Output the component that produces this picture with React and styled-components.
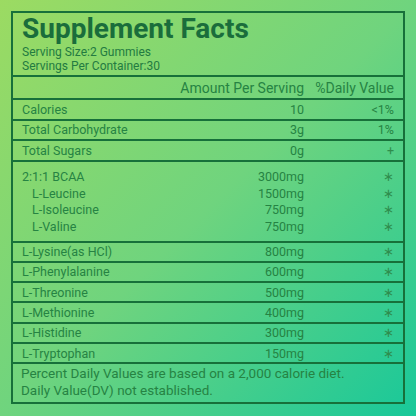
import React from "react";
import styled, { createGlobalStyle } from "styled-components";

const Global = createGlobalStyle`
  html, body { margin: 0; padding: 0; }
  body { font-family: Roboto, "Liberation Sans", sans-serif; }
`;

const Page = styled.div`
  width: 416px;
  height: 416px;
  box-sizing: border-box;
  padding: 11px;
  background: linear-gradient(135deg, #9cdb62 0%, #6fd47e 50%, #18c89a 100%);
`;

const Panel = styled.div`
  width: 394px;
  height: 393px;
  box-sizing: border-box;
  border: 2px solid #17703a;
  display: flex;
  flex-direction: column;
  color: #268343;
`;

const Header = styled.div`
  height: 64px;
  box-sizing: border-box;
  padding: 0 9px;
  border-bottom: 2px solid #17703a;
`;

const Title = styled.h1`
  margin: 0;
  font-size: 28px;
  line-height: 32px;
  font-weight: 700;
  color: #1a6d3b;
`;

const Serving = styled.div`
  font-size: 12px;
  line-height: 14px;
  color: #237b41;
`;

const Row = styled.div`
  display: grid;
  grid-template-columns: 1fr auto 90px;
  align-items: center;
  padding: 0 9px;
  height: ${(p) => p.$h}px;
  border-bottom: 2px solid #17703a;
  font-size: ${(p) => (p.$head ? 14 : 12.5)}px;
`;

const Block = styled.div`
  padding: 7px 9px 6px;
  border-bottom: 2px solid #17703a;
`;

const Sub = styled.div`
  display: grid;
  grid-template-columns: 1fr auto 90px;
  align-items: center;
  height: 16.5px;
  font-size: 12.5px;
`;

const Label = styled.span`
  padding-left: ${(p) => (p.$indent ? 10 : 0)}px;
  white-space: nowrap;
`;

const Amount = styled.span`
  text-align: right;
  white-space: nowrap;
`;

const DV = styled.span`
  text-align: right;
  white-space: nowrap;
  color: ${(p) => (p.$star ? "#2f8d4d" : "inherit")};
`;

const Footer = styled.div`
  flex: 1;
  padding: 1px 8px 0;
  font-size: 13.5px;
  line-height: 17px;
  color: #268343;
`;

const STAR = "\u2217";

const top = [
  ["Calories", "10", "<1%"],
  ["Total Carbohydrate", "3g", "1%"],
  ["Total Sugars", "0g", "+"],
];

const bcaa = [
  ["2:1:1 BCAA", "3000mg", false],
  ["L-Leucine", "1500mg", true],
  ["L-Isoleucine", "750mg", true],
  ["L-Valine", "750mg", true],
];

const aminos = [
  ["L-Lysine(as HCl)", "800mg"],
  ["L-Phenylalanine", "600mg"],
  ["L-Threonine", "500mg"],
  ["L-Methionine", "400mg"],
  ["L-Histidine", "300mg"],
  ["L-Tryptophan", "150mg"],
];

export default function App() {
  return (
    <>
      <Global />
      <Page>
        <Panel>
          <Header>
            <Title>Supplement Facts</Title>
            <Serving>Serving Size:2 Gummies</Serving>
            <Serving>Servings Per Container:30</Serving>
          </Header>
          <Row $h={21} $head>
            <span />
            <Amount>Amount Per Serving</Amount>
            <DV>%Daily Value</DV>
          </Row>
          {top.map(([l, a, d]) => (
            <Row key={l} $h={18.5}>
              <Label>{l}</Label>
              <Amount>{a}</Amount>
              <DV $star={d === "+"}>{d}</DV>
            </Row>
          ))}
          <Block>
            {bcaa.map(([l, a, ind]) => (
              <Sub key={l + a}>
                <Label $indent={ind}>{l}</Label>
                <Amount>{a}</Amount>
                <DV $star>{STAR}</DV>
              </Sub>
            ))}
          </Block>
          {aminos.map(([l, a]) => (
            <Row key={l} $h={18.33}>
              <Label>{l}</Label>
              <Amount>{a}</Amount>
              <DV $star>{STAR}</DV>
            </Row>
          ))}
          <Footer>
            Percent Daily Values are based on a 2,000 calorie diet.
            <br />
            Daily Value(DV) not established.
          </Footer>
        </Panel>
      </Page>
    </>
  );
}
